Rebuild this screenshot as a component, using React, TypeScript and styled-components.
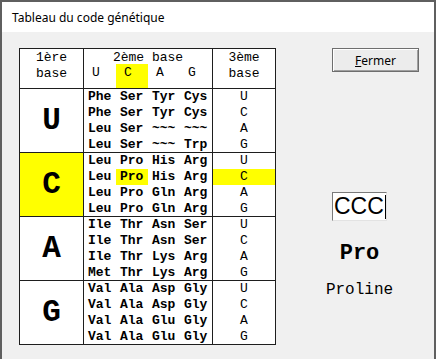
import React from 'react'
import styled, { createGlobalStyle } from 'styled-components'

const GlobalStyle = createGlobalStyle`
  html, body {
    margin: 0;
    padding: 0;
    background: #f0f0f0;
  }
`

const MONO = `"Liberation Mono", "Courier New", monospace`
const UI = `"Noto Sans", "Liberation Sans", Arial, sans-serif`
const YELLOW = '#ffff00'
const LINE = '#1e1e1e'

const BASES = ['U', 'C', 'A', 'G']

const CODE: string[][][] = [
  [
    ['Phe', 'Ser', 'Tyr', 'Cys'],
    ['Phe', 'Ser', 'Tyr', 'Cys'],
    ['Leu', 'Ser', '~~~', '~~~'],
    ['Leu', 'Ser', '~~~', 'Trp']
  ],
  [
    ['Leu', 'Pro', 'His', 'Arg'],
    ['Leu', 'Pro', 'His', 'Arg'],
    ['Leu', 'Pro', 'Gln', 'Arg'],
    ['Leu', 'Pro', 'Gln', 'Arg']
  ],
  [
    ['Ile', 'Thr', 'Asn', 'Ser'],
    ['Ile', 'Thr', 'Asn', 'Ser'],
    ['Ile', 'Thr', 'Lys', 'Arg'],
    ['Met', 'Thr', 'Lys', 'Arg']
  ],
  [
    ['Val', 'Ala', 'Asp', 'Gly'],
    ['Val', 'Ala', 'Asp', 'Gly'],
    ['Val', 'Ala', 'Glu', 'Gly'],
    ['Val', 'Ala', 'Glu', 'Gly']
  ]
]

const Window = styled.div`
  width: 436px;
  height: 359px;
  box-sizing: border-box;
  border: 2px solid #5f5f5f;
  border-bottom: none;
  background: #f0f0f0;
  display: flex;
  flex-direction: column;
  overflow: hidden;
`

const TitleBar = styled.div`
  height: 30px;
  flex-shrink: 0;
  background: #fff;
  display: flex;
  align-items: center;
  padding-left: 10px;
  font-family: ${UI};
  font-size: 12px;
  color: #000;
`

const Body = styled.div`
  display: flex;
  align-items: flex-start;
  padding: 16px 0 0 17px;
  gap: 56px;
`

const Table = styled.div`
  display: grid;
  grid-template-columns: 63px 128px 62px;
  grid-template-rows: 39px repeat(4, 63px);
  gap: 1px;
  background: ${LINE};
  border: 1px solid ${LINE};
  font-family: ${MONO};
  font-size: 13px;
  color: #000;
`

const Cell = styled.div<{ $hl?: boolean }>`
  background: ${(p) => (p.$hl ? YELLOW : '#fff')};
`

const HeadCell = styled(Cell)`
  display: flex;
  flex-direction: column;
  align-items: center;
  padding-top: 1px;
  line-height: 16px;
`

const SecondHead = styled(Cell)`
  display: grid;
  grid-template-rows: 15px 24px;
`

const HeadTitle = styled.div`
  text-align: center;
  padding-top: 1px;
  line-height: 16px;
`

const HeadBases = styled.div`
  display: grid;
  grid-template-columns: repeat(4, 32px);
`

const HeadBase = styled.div<{ $hl?: boolean }>`
  background: ${(p) => (p.$hl ? YELLOW : 'transparent')};
  padding: 1px 0 0 8px;
  line-height: 16px;
`

const FirstBase = styled(Cell)`
  display: flex;
  align-items: center;
  justify-content: center;
  font-size: 31px;
  font-weight: bold;
`

const Lines = styled(Cell)`
  display: grid;
  grid-template-rows: repeat(4, 1fr);
`

const AminoRow = styled.div`
  display: grid;
  grid-template-columns: repeat(4, 32px);
  font-weight: bold;
`

const Amino = styled.div<{ $hl?: boolean }>`
  background: ${(p) => (p.$hl ? YELLOW : 'transparent')};
  padding-left: 4px;
  display: flex;
  align-items: center;
`

const ThirdBase = styled.div<{ $hl?: boolean }>`
  background: ${(p) => (p.$hl ? YELLOW : 'transparent')};
  display: flex;
  align-items: center;
  justify-content: center;
`

const Side = styled.div`
  display: flex;
  flex-direction: column;
  align-items: flex-start;
`

const Button = styled.button`
  width: 87px;
  height: 24px;
  box-sizing: border-box;
  padding: 0;
  background: #ececec;
  border: 1px solid #6e6e6e;
  box-shadow: inset 1px 1px 0 #fff, inset -1px -1px 0 #a0a0a0;
  font-family: ${UI};
  font-size: 12px;
  color: #000;

  u {
    text-decoration-thickness: 1px;
  }
`

const Result = styled.div`
  width: 55px;
  margin-top: 120px;
  display: flex;
  flex-direction: column;
  align-items: center;
`

const CodonBox = styled.div`
  width: 55px;
  height: 29px;
  box-sizing: border-box;
  background: #fff;
  border: 1px solid;
  border-color: #7a7a7a #e3e3e3 #e3e3e3 #7a7a7a;
  display: flex;
  align-items: center;
  padding-left: 1px;
  font-family: "Liberation Sans", Arial, sans-serif;
  font-size: 23px;
  color: #000;
`

const Caret = styled.span`
  display: inline-block;
  width: 1px;
  height: 24px;
  background: #000;
  margin-left: 1px;
`

const AminoName = styled.div`
  margin-top: 21px;
  font-family: ${MONO};
  font-size: 22px;
  font-weight: bold;
  line-height: 24px;
`

const FullName = styled.div`
  margin-top: 15px;
  font-family: ${MONO};
  font-size: 16px;
  line-height: 18px;
  white-space: nowrap;
`

const App = () => {
  const codon = 'CCC'
  const [b1, b2, b3] = codon.split('').map((c) => BASES.indexOf(c))

  return (
    <>
      <GlobalStyle />
      <Window>
        <TitleBar>Tableau du code génétique</TitleBar>
        <Body>
          <Table>
            <HeadCell>
              <span>1ère</span>
              <span>base</span>
            </HeadCell>
            <SecondHead>
              <HeadTitle>2ème base</HeadTitle>
              <HeadBases>
                {BASES.map((b, i) => (
                  <HeadBase key={b} $hl={i === b2}>
                    {b}
                  </HeadBase>
                ))}
              </HeadBases>
            </SecondHead>
            <HeadCell>
              <span>3ème</span>
              <span>base</span>
            </HeadCell>
            {CODE.map((block, i) => (
              <React.Fragment key={i}>
                <FirstBase $hl={i === b1}>{BASES[i]}</FirstBase>
                <Lines>
                  {block.map((row, k) => (
                    <AminoRow key={k}>
                      {row.map((aa, j) => (
                        <Amino key={j} $hl={i === b1 && j === b2 && k === b3}>
                          {aa}
                        </Amino>
                      ))}
                    </AminoRow>
                  ))}
                </Lines>
                <Lines>
                  {BASES.map((b, k) => (
                    <ThirdBase key={b} $hl={i === b1 && k === b3}>
                      {b}
                    </ThirdBase>
                  ))}
                </Lines>
              </React.Fragment>
            ))}
          </Table>
          <Side>
            <Button>
              <u>F</u>ermer
            </Button>
            <Result>
              <CodonBox>
                {codon}
                <Caret />
              </CodonBox>
              <AminoName>Pro</AminoName>
              <FullName>Proline</FullName>
            </Result>
          </Side>
        </Body>
      </Window>
    </>
  )
}

export default App
